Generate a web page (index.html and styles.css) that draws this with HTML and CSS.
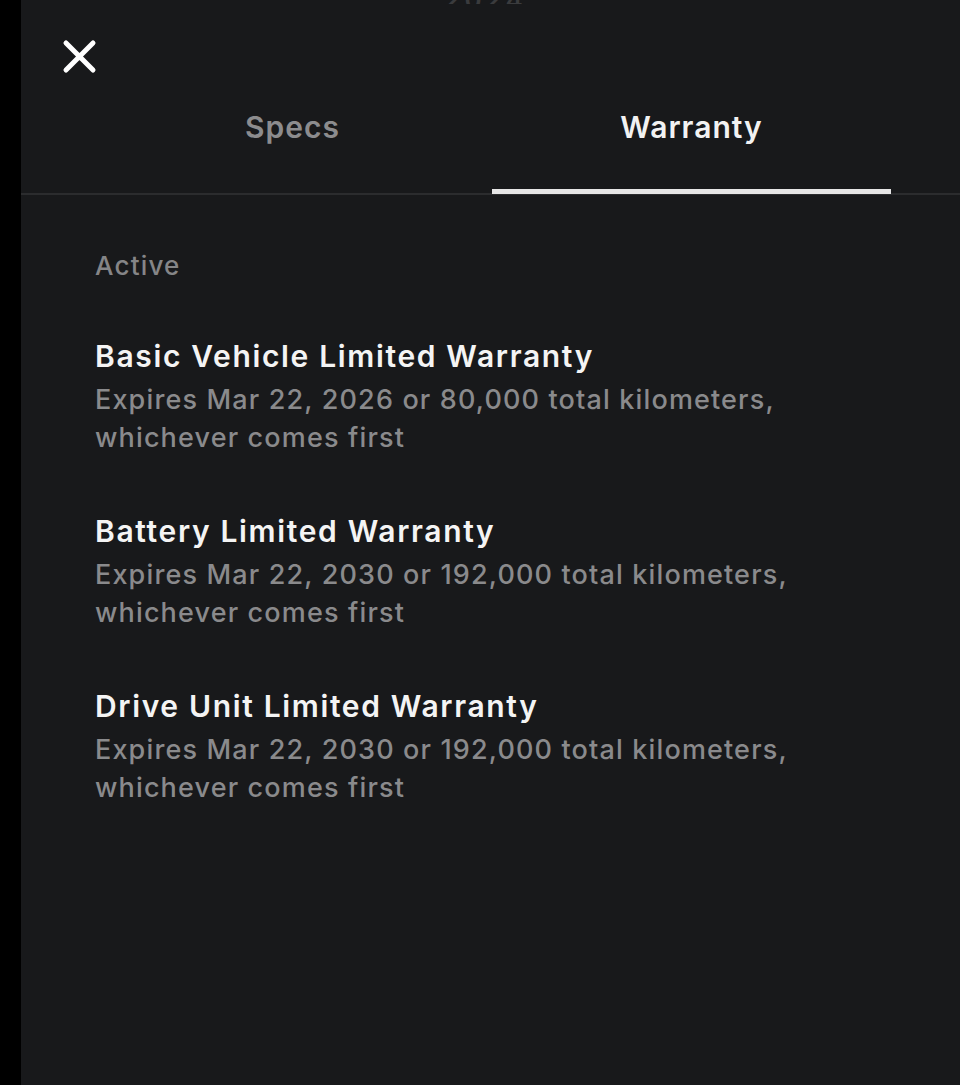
FILE: index.html
```html
<!DOCTYPE html>
<html lang="en">
<head>
  <meta charset="UTF-8">
  <meta name="viewport" content="width=device-width, initial-scale=1.0">
  <title>Warranty</title>
  <link rel="stylesheet" href="styles.css">
</head>
<body>
  <div class="panel">
    <div class="top-title">2024</div>
    <button class="close" aria-label="Close">
      <svg width="36" height="36" viewBox="0 0 36 36">
        <path d="M4 4 L31 31 M31 4 L4 31" stroke="#fff" stroke-width="5" stroke-linecap="round" fill="none"/>
      </svg>
    </button>
    <div class="tabs">
      <div class="tab">Specs</div>
      <div class="tab active">Warranty</div>
    </div>
    <div class="content">
      <div class="section-label">Active</div>
      <div class="item">
        <div class="item-title">Basic Vehicle Limited Warranty</div>
        <div class="item-desc">Expires Mar 22, 2026 or 80,000 total kilometers,<br>whichever comes first</div>
      </div>
      <div class="item">
        <div class="item-title">Battery Limited Warranty</div>
        <div class="item-desc">Expires Mar 22, 2030 or 192,000 total kilometers,<br>whichever comes first</div>
      </div>
      <div class="item">
        <div class="item-title">Drive Unit Limited Warranty</div>
        <div class="item-desc">Expires Mar 22, 2030 or 192,000 total kilometers,<br>whichever comes first</div>
      </div>
    </div>
  </div>
</body>
</html>
```

FILE: styles.css
```css
html, body {
  margin: 0;
  height: 100%;
}

body {
  background-color: #000;
  font-family: Inter, "Noto Sans", sans-serif;
  padding-left: 21px;
  box-sizing: border-box;
}

.panel {
  background-color: #18191b;
  height: 100%;
  overflow: hidden;
}

.top-title {
  height: 4px;
  overflow: hidden;
  line-height: 0;
  text-align: center;
  color: #3a3b3d;
  font-size: 26px;
  font-weight: 600;
  letter-spacing: 4px;
  padding-right: 10px;
}

.close {
  display: block;
  margin: 35px 0 0 41px;
  padding: 0;
  border: none;
  background: none;
  width: 36px;
  height: 36px;
  cursor: pointer;
}

.close svg {
  display: block;
}

.tabs {
  display: flex;
  margin-top: 34px;
  padding: 0 69px 0 72px;
  border-bottom: 2px solid #2b2c2e;
}

.tab {
  flex: 1;
  text-align: center;
  font-size: 30px;
  font-weight: 600;
  color: #8c8c8e;
  letter-spacing: 1px;
  padding: 0 0 44px;
  border-bottom: 5px solid transparent;
  margin-bottom: -1px;
}

.tab.active {
  color: #f2f2f2;
  border-bottom-color: #e6e6e6;
}

.content {
  padding: 55px 69px 0 74px;
}

.section-label {
  font-size: 26px;
  font-weight: 500;
  color: #858587;
  letter-spacing: 1.2px;
  margin-bottom: 56px;
}

.item {
  margin-bottom: 55px;
}

.item-title {
  font-size: 30px;
  font-weight: 600;
  color: #f4f4f4;
  letter-spacing: 1.65px;
  line-height: 38px;
  margin-bottom: 6px;
}

.item-desc {
  font-size: 27px;
  font-weight: 500;
  color: #8a8a8c;
  letter-spacing: 1.15px;
  line-height: 38px;
}
```
